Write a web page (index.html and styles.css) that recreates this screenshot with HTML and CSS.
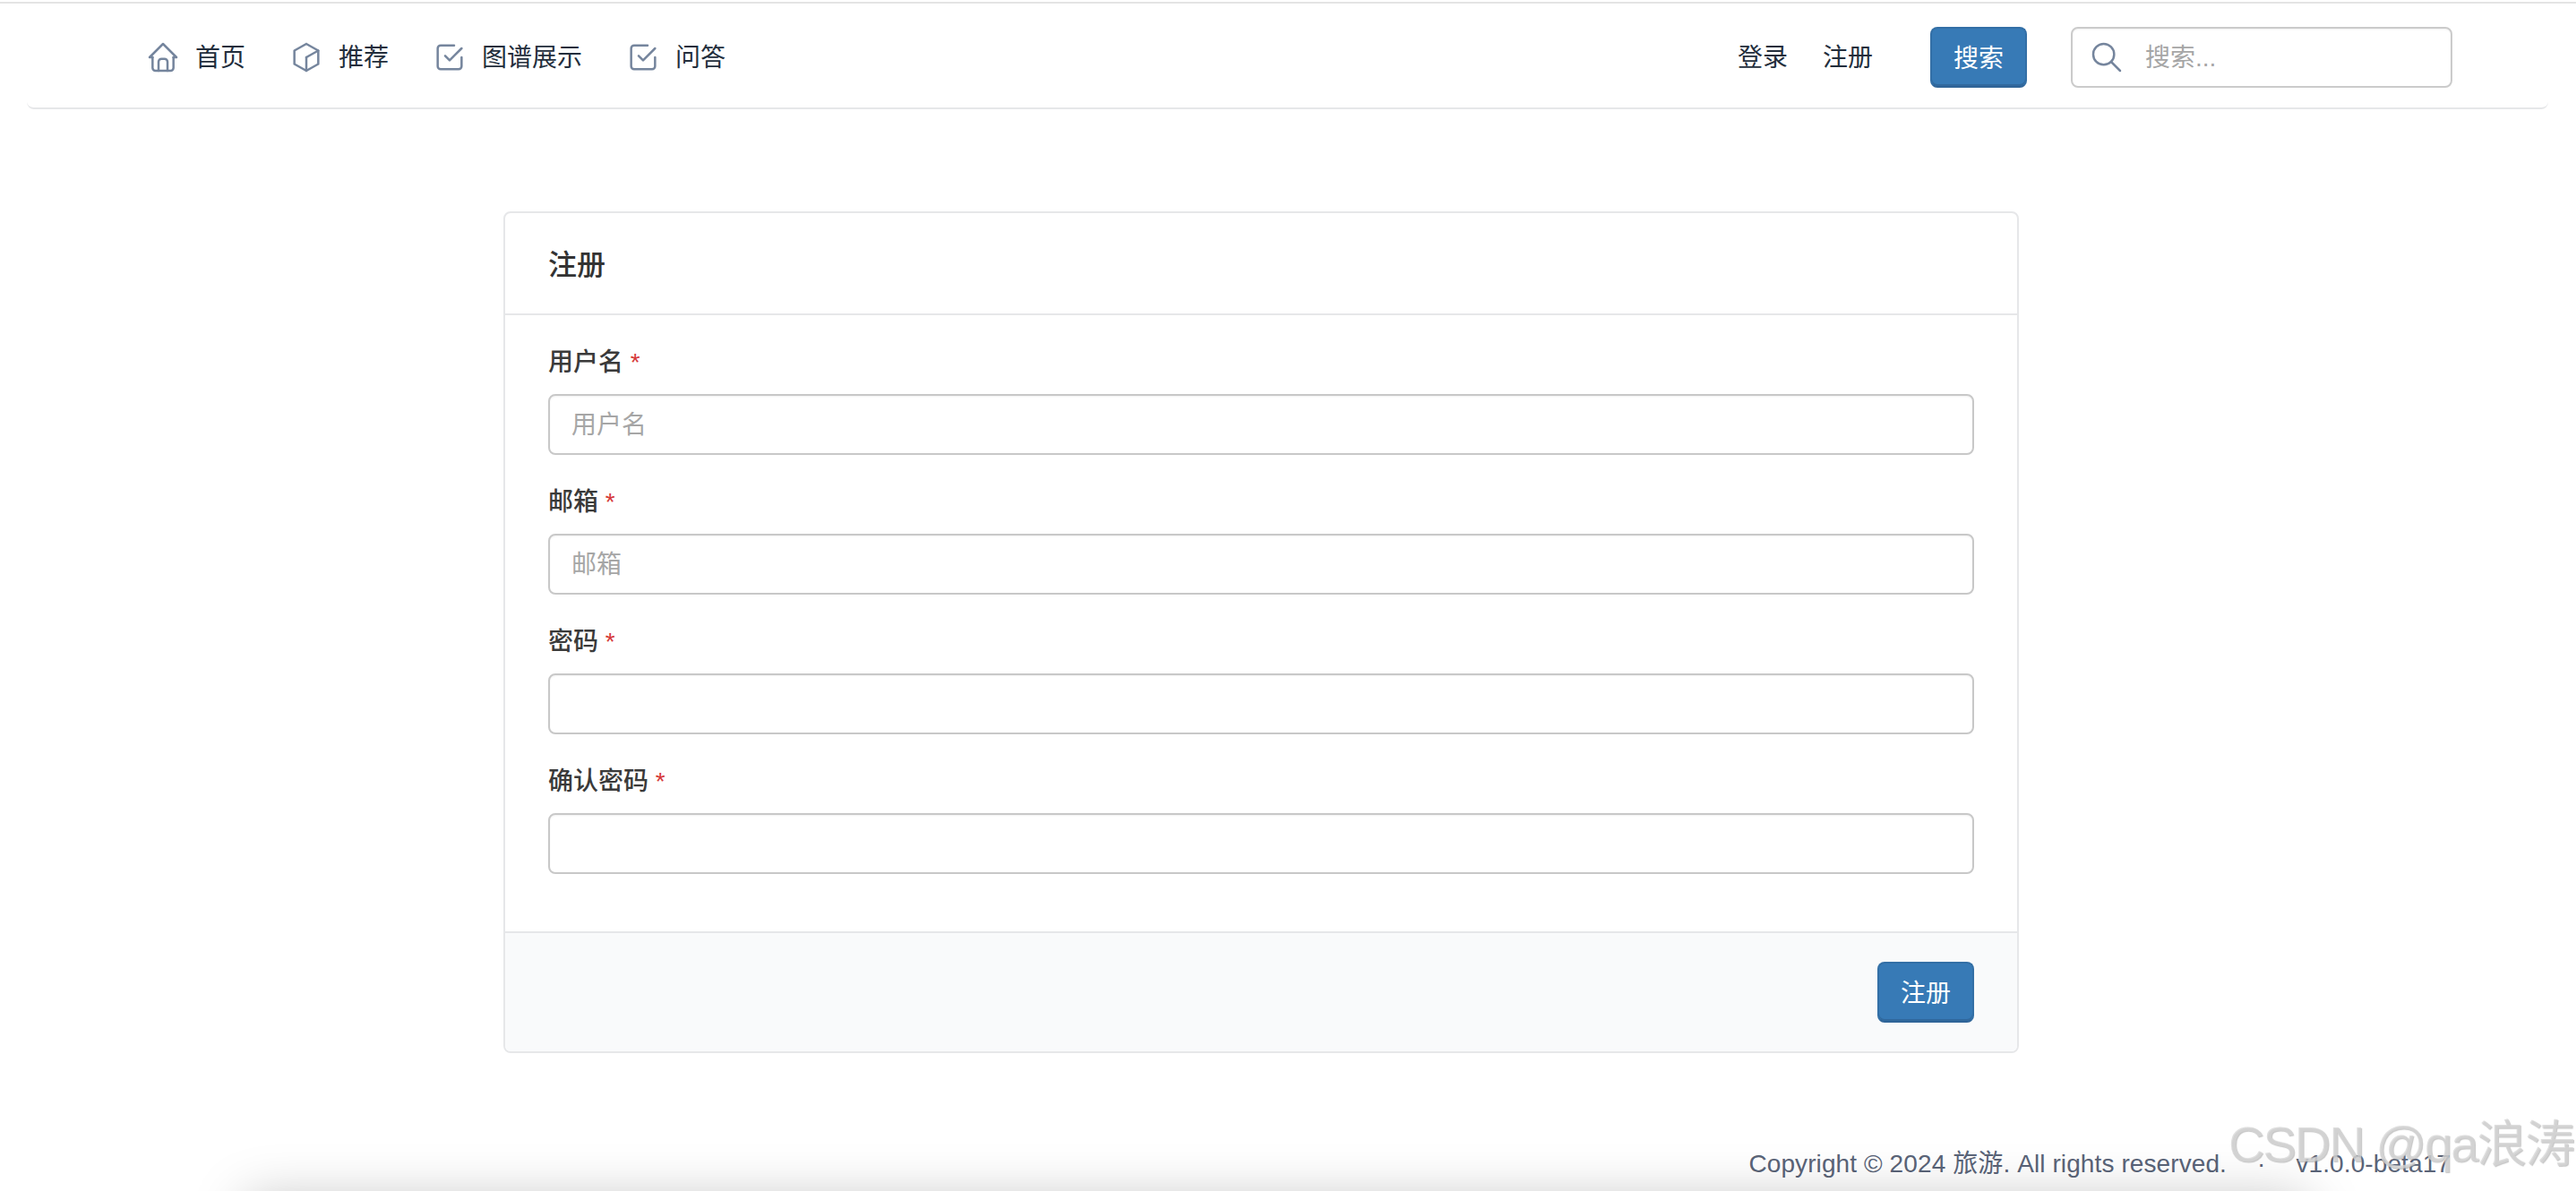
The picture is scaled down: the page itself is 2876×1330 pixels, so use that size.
FILE: index.html
```html
<!DOCTYPE html>
<html lang="zh-CN">
<head>
  <meta charset="UTF-8">
  <meta name="viewport" content="width=device-width, initial-scale=1.0">
  <title>注册</title>
  <link rel="stylesheet" href="styles.css">
</head>
<body>

  <div class="top-line"></div>

  <header class="navbar">
    <nav class="nav-list">
      <a class="nav-link">
        <svg class="icon" viewBox="0 0 24 24"><path d="M5 12l-2 0l9 -9l9 9l-2 0"/><path d="M5 12v7a2 2 0 0 0 2 2h10a2 2 0 0 0 2 -2v-7"/><path d="M9 21v-6a2 2 0 0 1 2 -2h2a2 2 0 0 1 2 2v6"/></svg>
        <span class="nav-text">首页</span>
      </a>
      <a class="nav-link">
        <svg class="icon" viewBox="0 0 24 24"><path d="M12 3l8 4.5l0 9l-8 4.5l-8 -4.5l0 -9l8 -4.5"/><path d="M12 12l8 -4.5"/><path d="M12 12l0 9"/></svg>
        <span class="nav-text">推荐</span>
      </a>
      <a class="nav-link">
        <svg class="icon" viewBox="0 0 24 24"><path d="M9 11l3 3l8 -8"/><path d="M20 12v6a2 2 0 0 1 -2 2h-12a2 2 0 0 1 -2 -2v-12a2 2 0 0 1 2 -2h9"/></svg>
        <span class="nav-text">图谱展示</span>
      </a>
      <a class="nav-link">
        <svg class="icon" viewBox="0 0 24 24"><path d="M9 11l3 3l8 -8"/><path d="M20 12v6a2 2 0 0 1 -2 2h-12a2 2 0 0 1 -2 -2v-12a2 2 0 0 1 2 -2h9"/></svg>
        <span class="nav-text">问答</span>
      </a>
    </nav>

    <div class="nav-right">
      <div class="auth-links">
        <a class="nav-link"><span class="nav-text">登录</span></a>
        <a class="nav-link"><span class="nav-text">注册</span></a>
      </div>
      <button class="button search-button">搜索</button>
      <div class="search-box">
        <svg class="icon" viewBox="0 0 24 24"><path d="M10 10m-7 0a7 7 0 1 0 14 0a7 7 0 1 0 -14 0"/><path d="M21 21l-6 -6"/></svg>
        <input type="text" class="search-input" placeholder="搜索...">
      </div>
    </div>
  </header>

  <main class="content">
    <form class="card">
      <div class="card-header">注册</div>
      <div class="card-body">
        <div class="field">
          <label class="field-label">用户名 <span class="required">*</span></label>
          <input type="text" class="field-input" placeholder="用户名">
        </div>
        <div class="field">
          <label class="field-label">邮箱 <span class="required">*</span></label>
          <input type="text" class="field-input" placeholder="邮箱">
        </div>
        <div class="field">
          <label class="field-label">密码 <span class="required">*</span></label>
          <input type="password" class="field-input">
        </div>
        <div class="field">
          <label class="field-label">确认密码 <span class="required">*</span></label>
          <input type="password" class="field-input">
        </div>
      </div>
      <div class="card-footer">
        <button type="button" class="button">注册</button>
      </div>
    </form>
  </main>

  <footer class="footer">
    <span>Copyright © 2024 旅游. All rights reserved.</span>
    <span class="footer-dot">·</span>
    <span>v1.0.0-beta17</span>
  </footer>

  <div class="bottom-shade"></div>
  <div class="watermark">CSDN @qa浪涛</div>

</body>
</html>
```

FILE: styles.css
```css
* {
  box-sizing: border-box;
}

html,
body {
  height: 100%;
}

body {
  margin: 0;
  padding-top: 2px;
  display: flex;
  flex-direction: column;
  overflow: hidden;
  background-color: #fff;
  color: #333;
  font-family: "Liberation Sans", "Noto Sans CJK SC", sans-serif;
  font-size: 28px;
}

.top-line {
  height: 2px;
  background-color: #e4e4e4;
}

.navbar {
  display: flex;
  justify-content: space-between;
  align-items: center;
  margin: 0 31px 0 30px;
  padding: 26px 107px 22px 132px;
  background-color: #fff;
  border-bottom: 2px solid #e6e7e9;
  border-radius: 0 0 8px 8px;
}

.nav-list {
  display: flex;
  align-items: center;
  gap: 48px;
}

.nav-link {
  display: flex;
  align-items: center;
  gap: 16px;
  color: #232e3c;
  line-height: 40px;
}

.nav-text {
  padding-top: 2px;
}

.icon {
  width: 40px;
  height: 40px;
  flex-shrink: 0;
  fill: none;
  stroke: #75859d;
  stroke-width: 1.5;
  stroke-linecap: round;
  stroke-linejoin: round;
}

.nav-right {
  display: flex;
  align-items: center;
}

.auth-links {
  display: flex;
  gap: 39px;
  margin-right: 64px;
}

.button {
  height: 68px;
  padding: 0 24px 2px;
  background-color: #377ab6;
  color: #fff;
  border: 2px solid #336fa6;
  border-bottom-color: #2f6498;
  border-radius: 8px;
  box-shadow: inset 0 -2px 0 #30689d;
  font-family: inherit;
  font-size: 28px;
}

.search-button {
  margin-right: 49px;
}

.search-box {
  display: flex;
  align-items: center;
  gap: 23px;
  width: 426px;
  height: 68px;
  padding: 0 16px 0 18px;
  border: 2px solid #cbcbcb;
  border-radius: 8px;
  box-shadow: inset 0 1px 2px rgba(0, 0, 0, 0.06);
}

.search-input {
  flex: 1;
  min-width: 0;
  padding: 2px 0 0;
  border: none;
  outline: none;
  background: transparent;
  font-family: inherit;
  font-size: 28px;
}

.search-input::placeholder,
.field-input::placeholder {
  color: #a6a6a6;
  opacity: 1;
}

.content {
  padding: 114px 0 0 562px;
}

.card {
  width: 1692px;
  border: 2px solid #e6e7e9;
  border-radius: 8px;
  background-color: #fff;
}

.card-header {
  height: 114px;
  padding: 0 48px 2px;
  display: flex;
  align-items: center;
  border-bottom: 2px solid #e6e7e9;
  font-size: 32px;
  font-weight: 500;
}

.card-body {
  padding: 32px 48px;
}

.field {
  margin-bottom: 32px;
}

.field-label {
  display: block;
  height: 56px;
  padding-top: 1px;
  line-height: 40px;
  font-weight: 500;
  color: #3a3a3a;
}

.required {
  color: #d63939;
}

.field-input {
  display: block;
  width: 100%;
  height: 68px;
  padding: 2px 24px 0;
  border: 2px solid #c8c8c8;
  border-radius: 8px;
  outline: none;
  box-shadow: inset 0 1px 2px rgba(0, 0, 0, 0.06);
  font-family: inherit;
  font-size: 28px;
}

.card-footer {
  display: flex;
  justify-content: flex-end;
  padding: 32px 48px;
  background-color: #f9fafb;
  border-top: 2px solid #e6e7e9;
  border-radius: 0 0 6px 6px;
}

.footer {
  margin-top: auto;
  display: flex;
  justify-content: flex-end;
  gap: 34px;
  padding: 0 140px 10px 0;
  color: #5a6478;
  line-height: 40px;
  letter-spacing: 0.1px;
}

.bottom-shade {
  position: fixed;
  left: 275px;
  right: 300px;
  top: 1340px;
  height: 80px;
  box-shadow: 0 0 60px rgba(0, 0, 0, 0.25);
  pointer-events: none;
}

.watermark {
  position: fixed;
  left: 2488px;
  top: 1246px;
  color: rgba(215, 215, 215, 0.75);
  font-size: 56px;
  line-height: 64px;
  letter-spacing: -2px;
  white-space: nowrap;
  text-shadow: 1px 1px 1px rgba(140, 140, 140, 0.5);
  pointer-events: none;
}
```
